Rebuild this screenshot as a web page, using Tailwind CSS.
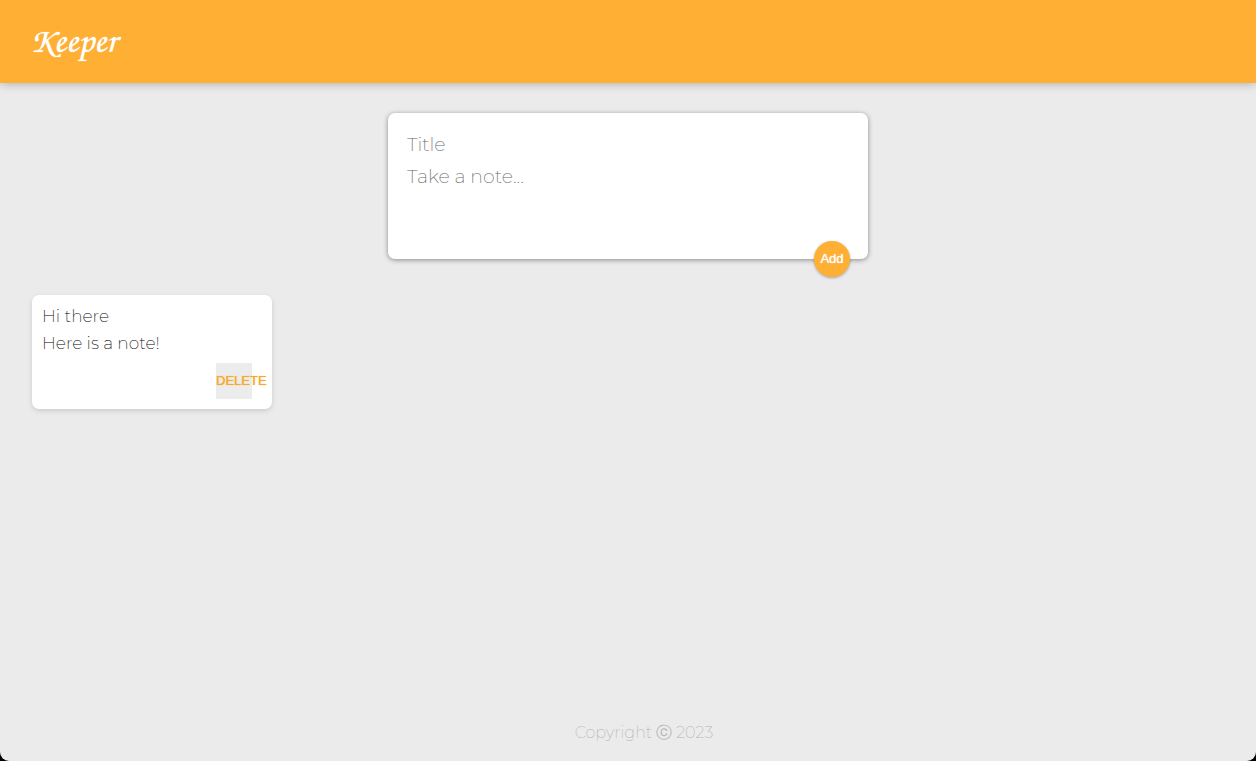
<!DOCTYPE html>
<html lang="en">
<head>
<meta charset="utf-8">
<meta name="viewport" content="width=device-width, initial-scale=1">
<title>Keeper</title>
<script src="https://cdn.jsdelivr.net/npm/@tailwindcss/browser@4"></script>
</head>
<body class="bg-black">
<div class="flex min-h-screen flex-col rounded-b-[9px] bg-[#ebebeb] font-['Montserrat','Inter','Liberation_Sans',sans-serif] font-extralight text-black">
  <header class="bg-[#ffaf34] px-[30px] pt-[11px] pb-[17px] shadow-[0_0_10px_rgba(0,0,0,0.3)]">
    <h1 class="font-['Apple_Chancery','Monotype_Corsiva','TeX_Gyre_Chorus','Liberation_Serif',cursive] text-[36px] leading-[55px] font-normal text-white [text-shadow:0_0_1px_white]">Keeper</h1>
  </header>
  <main class="flex-1 px-8">
    <form class="relative mx-auto mt-[30px] flex w-full max-w-[480px] flex-col rounded-[7px] bg-white p-[15px] shadow-[0_1px_5px_rgb(138,137,137)]">
      <input type="text" aria-label="Title" placeholder="Title" class="h-8 w-full px-1 text-[19px] leading-6 outline-none placeholder:text-[#666]">
      <textarea rows="3" aria-label="Note" placeholder="Take a note..." class="h-[84px] w-full resize-none px-1 py-[5px] text-[19px] leading-6 outline-none placeholder:text-[#666]"></textarea>
      <button type="button" class="absolute right-[18px] -bottom-[18px] size-9 rounded-full bg-[#ffaf34] font-['Liberation_Sans',sans-serif] text-[13px] font-normal text-white shadow-[0_1px_3px_rgba(0,0,0,0.3)] [text-shadow:0_0_1px_white]">Add</button>
    </form>
    <article class="mt-9 flex w-60 flex-col rounded-[7px] bg-white p-2.5 shadow-[0_2px_5px_#ccc]">
      <h2 class="text-[17px] leading-[22px]">Hi there</h2>
      <p class="mt-[5px] mb-[9px] text-[17px] leading-[22px]">Here is a note!</p>
      <button type="button" class="mr-2.5 flex size-9 items-center self-end bg-[#ececec] font-['Liberation_Sans',sans-serif] text-[13px] font-normal whitespace-nowrap text-[#f5a930] [text-shadow:0_0_1px_#f5a930]">DELETE</button>
    </article>
  </main>
  <footer class="pb-4 pl-8 text-center text-base leading-6 text-[#b5b5b5]">Copyright ⓒ 2023</footer>
</div>
</body>
</html>
